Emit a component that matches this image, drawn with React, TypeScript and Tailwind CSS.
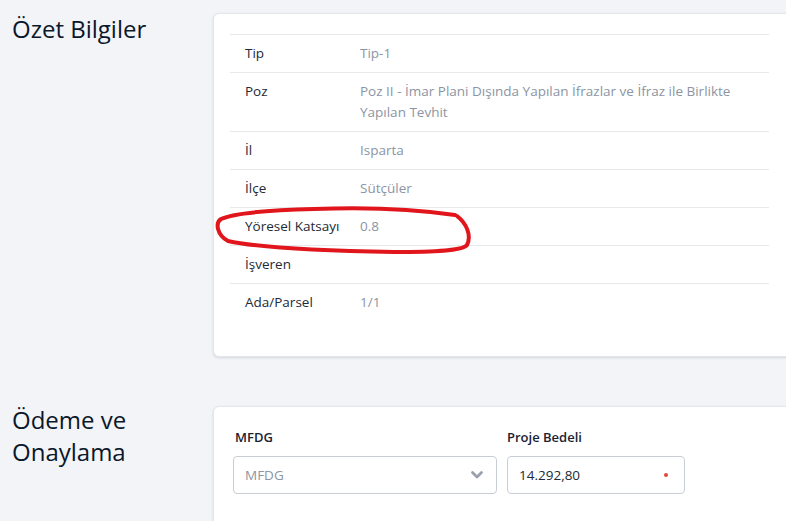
import React from "react";

const rows: { label: string; value: string }[] = [
  { label: "Tip", value: "Tip-1" },
  {
    label: "Poz",
    value:
      "Poz II - İmar Plani Dışında Yapılan İfrazlar ve İfraz ile Birlikte Yapılan Tevhit",
  },
  { label: "İl", value: "Isparta" },
  { label: "İlçe", value: "Sütçüler" },
  { label: "Yöresel Katsayı", value: "0.8" },
  { label: "İşveren", value: "" },
  { label: "Ada/Parsel", value: "1/1" },
];

export default function App() {
  return (
    <div
      className="relative w-[786px] h-[521px] overflow-hidden bg-[#f3f4f8] text-[#1b2232]"
      style={{ fontFamily: "'Open Sans', 'Noto Sans', sans-serif" }}
    >
      <div className="flex pt-[13px]">
        <div className="w-[213px] shrink-0 pl-3">
          <h2 className="text-[24px] leading-8 text-[#0b172b]">Özet Bilgiler</h2>
        </div>
        <div className="w-[600px] shrink-0 h-[344px] bg-white rounded-md border border-[#e3e6ec] shadow-sm pl-[16px] pr-[43px] pt-[20px]">
          <table className="w-full text-[13.5px] border-collapse">
            <tbody>
              {rows.map((r) => (
                <tr key={r.label} className="border-t border-[#e6e8ec]">
                  <td className="w-[130px] pl-[15px] py-[8px] align-top leading-[21px] text-[#222a36]">
                    {r.label}
                  </td>
                  <td className="pr-4 py-[8px] leading-[21px] text-[#8b95a3]">{r.value}</td>
                </tr>
              ))}
            </tbody>
          </table>
        </div>
      </div>

      <div className="flex mt-[49px]">
        <div className="w-[213px] shrink-0 pl-3 -mt-[2px]">
          <h2 className="text-[24px] leading-8 text-[#0b172b]">
            Ödeme ve
            <br />
            Onaylama
          </h2>
        </div>
        <div className="w-[600px] shrink-0 h-[140px] bg-white rounded-md border border-[#e3e6ec] shadow-sm pl-[19px] pt-[20px]">
          <div className="flex gap-[10px]">
            <div className="flex flex-col">
              <label className="text-[13px] font-semibold text-[#1b2232] leading-5 pl-[2px]">MFDG</label>
              <div className="mt-[9px] w-[264px] h-[38px] border border-[#c9ced6] rounded flex items-center justify-between px-[11px] text-[13.5px] text-[#8b95a3]">
                <span>MFDG</span>
                <svg width="16" height="16" viewBox="0 0 16 16" fill="none">
                  <path d="M3.5 5.5l4.5 4.5 4.5-4.5" stroke="#9aa1ab" strokeWidth="2.8" strokeLinecap="round" strokeLinejoin="round" />
                </svg>
              </div>
            </div>
            <div className="flex flex-col">
              <label className="text-[13px] font-semibold text-[#1b2232] leading-5">Proje Bedeli</label>
              <div className="mt-[9px] w-[178px] h-[38px] border border-[#c9ced6] rounded flex items-center justify-between pl-[11px] pr-[16px] text-[13.5px] text-[#222a36]">
                <span>14.292,80</span>
                <span className="w-[4px] h-[4px] rounded-full bg-[#e0483a]" />
              </div>
            </div>
          </div>
        </div>
      </div>

      <svg
        className="absolute left-[214px] top-[205px] pointer-events-none"
        width="262"
        height="52"
        viewBox="0 0 262 52"
        fill="none"
      >
        <path
          d="M241 10 C 200 4, 150 2, 100 4 C 60 5, 20 8, 7 14 C 1 18, 3 30, 14 36 C 50 44, 120 46, 180 47 C 220 47, 248 46, 253 40 C 258 30, 252 18, 243 11"
          stroke="#e0161c"
          strokeWidth="4"
          strokeLinecap="round"
          strokeLinejoin="round"
        />
      </svg>
    </div>
  );
}
